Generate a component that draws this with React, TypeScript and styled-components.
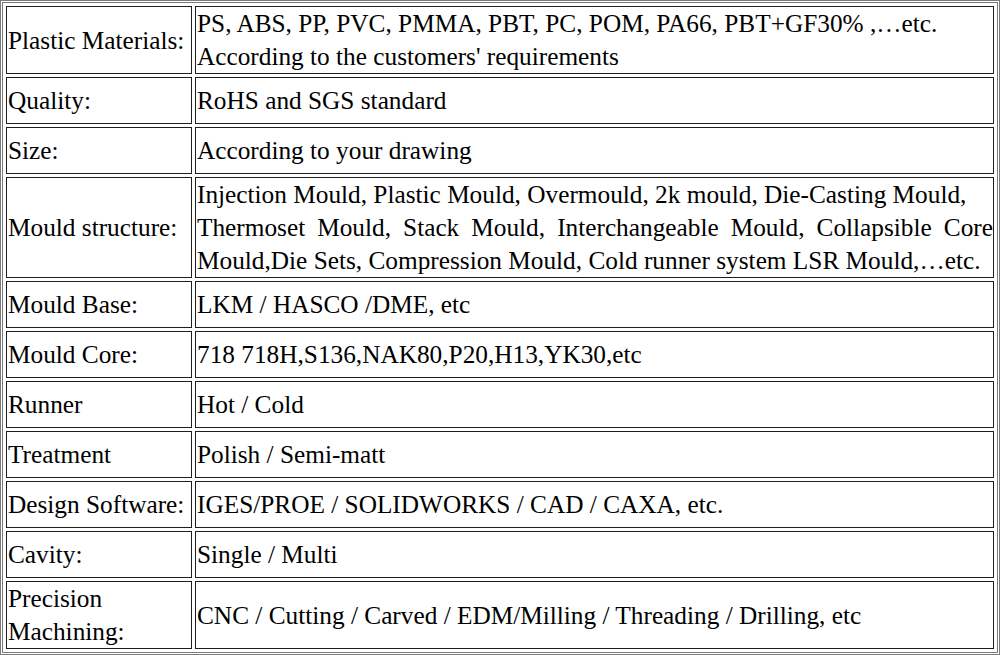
import React from "react";
import styled, { createGlobalStyle } from "styled-components";

const Global = createGlobalStyle`
  html, body { margin: 0; padding: 0; background: #ffffff; }
  body { font-family: "Liberation Serif", "Times New Roman", serif; color: #000; }
`;

const Table = styled.table`
  width: 1000px;
  table-layout: fixed;
  border: 3px double #7a7a7a;
  border-spacing: 3px;
  border-collapse: separate;
  font-family: "Liberation Serif", "Times New Roman", serif;
  font-size: 25.3px;
  line-height: 33px;
  color: #000;
`;

const Row = styled.tr<{ $h?: number }>`
  height: ${(p) => p.$h ?? 47}px;
`;

const Label = styled.td`
  border: 1px solid #1e1e1e;
  padding: 0 1px;
  vertical-align: middle;
  text-align: left;
  white-space: normal;
`;

const Value = styled.td`
  border: 1px solid #1e1e1e;
  padding: 0 0 0 1px;
  vertical-align: middle;
  text-align: left;
`;

const Line = styled.div<{ $justify?: boolean }>`
  display: block;
  white-space: nowrap;
  ${(p) =>
    p.$justify
      ? `white-space: normal; text-align: justify; text-align-last: justify;`
      : ``}
`;

type Item = { label: string; lines: { text: string; justify?: boolean }[] };

const items: Item[] = [
  {
    label: "Plastic Materials:",
    lines: [
      { text: "PS, ABS, PP, PVC, PMMA, PBT, PC, POM, PA66, PBT+GF30% ,…etc." },
      { text: "According to the customers' requirements" },
    ],
  },
  { label: "Quality:", lines: [{ text: "RoHS and SGS standard" }] },
  { label: "Size:", lines: [{ text: "According to your drawing" }] },
  {
    label: "Mould structure:",
    lines: [
      { text: "Injection Mould, Plastic Mould, Overmould, 2k mould, Die-Casting Mould," },
      {
        text: "Thermoset Mould, Stack Mould, Interchangeable Mould, Collapsible Core",
        justify: true,
      },
      { text: "Mould,Die Sets, Compression Mould, Cold runner system LSR Mould,…etc." },
    ],
  },
  { label: "Mould Base:", lines: [{ text: "LKM / HASCO /DME, etc" }] },
  { label: "Mould Core:", lines: [{ text: "718 718H,S136,NAK80,P20,H13,YK30,etc" }] },
  { label: "Runner", lines: [{ text: "Hot / Cold" }] },
  { label: "Treatment", lines: [{ text: "Polish / Semi-matt" }] },
  {
    label: "Design Software:",
    lines: [{ text: "IGES/PROE / SOLIDWORKS / CAD / CAXA, etc." }],
  },
  { label: "Cavity:", lines: [{ text: "Single / Multi" }] },
  {
    label: "Precision Machining:",
    lines: [{ text: "CNC / Cutting / Carved / EDM/Milling / Threading / Drilling, etc" }],
  },
];

export default function App() {
  return (
    <>
      <Global />
      <Table>
        <colgroup>
          <col style={{ width: 186 }} />
          <col />
        </colgroup>
        <tbody>
          {items.map((it) => (
            <Row key={it.label}>
              <Label>{it.label}</Label>
              <Value>
                {it.lines.map((l, i) => (
                  <Line key={i} $justify={l.justify}>
                    {l.text}
                  </Line>
                ))}
              </Value>
            </Row>
          ))}
        </tbody>
      </Table>
    </>
  );
}
